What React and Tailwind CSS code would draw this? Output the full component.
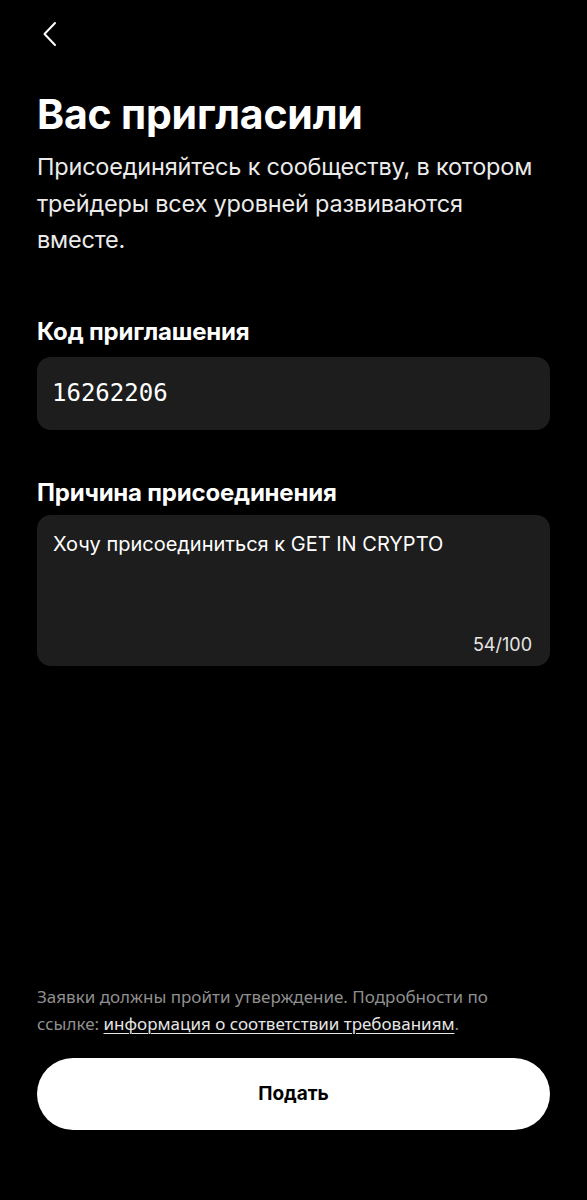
import { useState } from "react";

const sans = { fontFamily: "Inter, 'Noto Sans', sans-serif" };

function BackIcon() {
  return (
    <svg width="17" height="26" viewBox="0 0 17 26" fill="none" stroke="currentColor" strokeWidth="2" strokeLinecap="round" strokeLinejoin="round">
      <path d="M14 2 L3.5 13 L14 24" />
    </svg>
  );
}

export default function App() {
  const [code, setCode] = useState("16262206");
  const [reason, setReason] = useState("Хочу присоединиться к GET IN CRYPTO");

  return (
    <div className="min-h-[1200px] bg-black text-white flex flex-col px-[37px] font-['Inter','Noto_Sans',sans-serif]">
      <button className="mt-[21px] ml-[4px] w-fit text-white">
        <BackIcon />
      </button>

      <h1 className="mt-[42px] text-[41px] leading-[50px] font-bold tracking-[-0.2px]">Вас пригласили</h1>
      <p className="mt-[10px] pr-[4px] text-[23.5px] leading-[36.5px] text-[#ebebeb] tracking-[-0.2px]">
        Присоединяйтесь к сообществу, в котором трейдеры всех уровней развиваются вместе.
      </p>

      <label className="mt-[59px] text-[24px] leading-[28px] font-bold tracking-[-0.2px]">Код приглашения</label>
      <div className="mt-[11px] h-[73px] rounded-[14px] bg-[#1d1d1d] flex items-center pl-[15px]">
        <input
          value={code}
          onChange={(e) => setCode(e.target.value)}
          className="bg-transparent outline-none w-full text-[24px] text-white font-['DejaVu_Sans_Mono',monospace]"
        />
      </div>

      <label className="mt-[49px] text-[24px] leading-[28px] font-bold tracking-[-0.2px]">Причина присоединения</label>
      <div className="mt-[8px] h-[151px] rounded-[14px] bg-[#1d1d1d] flex flex-col pl-[16px] pr-[18px] pt-[17px] pb-[11px]">
        <textarea
          value={reason}
          onChange={(e) => setReason(e.target.value.slice(0, 100))}
          className="flex-1 bg-transparent outline-none resize-none text-[20px] leading-[24px] text-white"
          style={sans}
        />
        <span className="self-end text-[18px] leading-[20px] text-[#e6e6e6]">54/100</span>
      </div>

      <div className="flex-1" />

      <p className="pr-[10px] text-[17px] leading-[27px] text-[#8f8f8f] font-['Noto_Sans','Open_Sans',sans-serif]">
        Заявки должны пройти утверждение. Подробности по ссылке:{" "}
        <a className="text-[#e6e6e6] underline underline-offset-[3px] decoration-[1px]">информация о соответствии требованиям</a>.
      </p>

      <button className="mt-[21px] mb-[70px] h-[72px] rounded-full bg-white text-black text-[19px] font-bold">
        Подать
      </button>
    </div>
  );
}
